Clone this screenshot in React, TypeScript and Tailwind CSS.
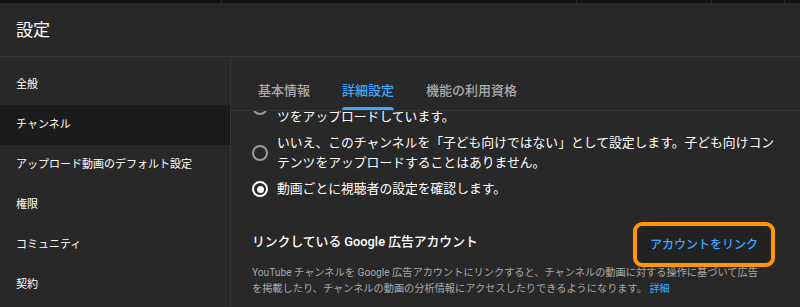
const font = "font-['Roboto','Noto_Sans_CJK_JP',sans-serif]"

const sideItems = [
  '全般',
  'チャンネル',
  'アップロード動画のデフォルト設定',
  '権限',
  'コミュニティ',
  '契約',
]

const tabs = ['基本情報', '詳細設定', '機能の利用資格']

function Radio({ checked }: { checked?: boolean }) {
  return (
    <span
      className={`flex h-4 w-4 shrink-0 items-center justify-center rounded-full border-2 ${
        checked ? 'border-white' : 'border-[#9a9a9a]'
      }`}
    >
      {checked && <span className="h-[7px] w-[7px] rounded-full bg-white" />}
    </span>
  )
}

export default function App() {
  return (
    <div className={`${font} h-[307px] w-[800px] overflow-hidden bg-[#282828] text-white`}>
      {/* page behind the dialog */}
      <div className="flex h-[3px] bg-[#111]">
        <div className="w-[222px] border-r border-[#2c2c2c]" />
        <div className="w-[355px] border-r border-[#2c2c2c]" />
        <div className="w-[135px] border-r border-[#2c2c2c]" />
        <div className="w-[73px] border-r border-[#2c2c2c]" />
      </div>

      <div className="flex h-[54px] items-center border-b border-[#353535] px-4 pt-[2px]">
        <h1 className="text-[17px] leading-none">設定</h1>
      </div>

      <div className="flex h-[250px]">
        <nav className="w-[231px] shrink-0 border-r border-[#353535] pt-2">
          {sideItems.map((item) => (
            <div
              key={item}
              className={`flex h-10 items-center px-4 text-[11px] ${
                item === 'チャンネル' ? 'bg-[#1b1b1b]' : ''
              }`}
            >
              {item}
            </div>
          ))}
        </nav>

        <div className="flex min-w-0 flex-1 flex-col">
          <div className="flex h-[54px] items-end gap-[32px] border-b border-[#353535] pl-[27px]">
            {tabs.map((t) => {
              const active = t === '詳細設定'
              return (
                <div key={t} className="flex flex-col">
                  <span
                    className={`text-[13px] font-medium leading-5 ${
                      active ? 'text-[#3ea6ff]' : 'text-[#aaaaaa]'
                    }`}
                  >
                    {t}
                  </span>
                  <span
                    className={`mt-[6px] h-[3px] rounded-t-sm ${active ? 'bg-[#3ea6ff]' : 'bg-transparent'}`}
                  />
                </div>
              )
            })}
          </div>

          <div className="flex-1 overflow-hidden pl-[21px] pr-[25px]">
            <div className="mt-[-24px] flex flex-col gap-[6px] text-[12.8px] leading-5">
              <div className="flex items-center gap-[9px]">
                <Radio />
                <p className="whitespace-nowrap">
                  はい、このチャンネルを「子ども向け」として設定します。常に子ども向けコンテン
                  <br />
                  ツをアップロードしています。
                </p>
              </div>
              <div className="flex items-center gap-[9px]">
                <Radio />
                <p className="whitespace-nowrap">
                  いいえ、このチャンネルを「子ども向けではない」として設定します。子ども向けコン
                  <br />
                  テンツをアップロードすることはありません。
                </p>
              </div>
              <div className="flex items-center gap-[9px]">
                <Radio checked />
                <p>動画ごとに視聴者の設定を確認します。</p>
              </div>
            </div>

            <div className="mt-[23px] flex h-[45px] items-center justify-between">
              <h2 className="mb-[5px] text-[12.8px] font-medium">リンクしている Google 広告アカウント</h2>
              <button
                type="button"
                className="flex h-[45px] w-[142px] items-center justify-center rounded-[9px] border-4 border-[#ff9800] bg-[#222] text-[12px] font-medium text-[#3ea6ff]"
              >
                アカウントをリンク
              </button>
            </div>

            <p className="mt-[-2px] whitespace-nowrap text-[10.2px] leading-4 text-[#aaaaaa]">
              YouTube チャンネルを Google 広告アカウントにリンクすると、チャンネルの動画に対する操作に基づいて広告
              <br />
              を掲載したり、チャンネルの動画の分析情報にアクセスしたりできるようになります。{' '}
              <span className="text-[#3ea6ff]">詳細</span>
            </p>
          </div>
        </div>
      </div>
    </div>
  )
}
